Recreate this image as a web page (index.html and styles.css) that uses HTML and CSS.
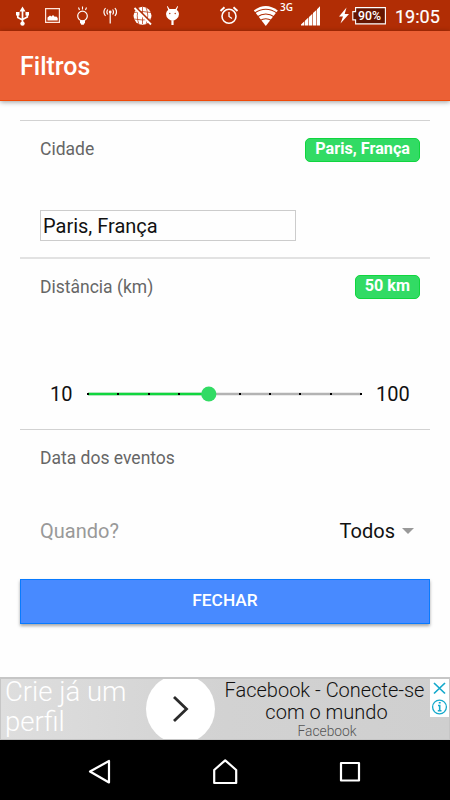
FILE: index.html
```html
<!DOCTYPE html>
<html lang="pt">
<head>
<meta charset="utf-8">
<title>Filtros</title>
<link rel="stylesheet" href="styles.css">
</head>
<body>
<div class="status">
  <svg class="usb" width="14" height="31" viewBox="16 0 14 31"><path d="M22.500 9v14M17.800 13v4.500l4.700 2.500M27.300 13v4l-4.800 2.500" fill="none" stroke="#fff" stroke-width="1.700"/><path d="M19.500 11.500l3-5 3 5zM16 12h3.500v3.500H16zM25.500 12H29v3.500h-3.500z" fill="#fff"/><circle cx="22.500" cy="23.600" r="2.200" fill="#fff"/></svg>
  <svg class="photo" width="16" height="31" viewBox="45 0 16 31"><path d="M45.600 8.600h13.800v13.800H45.600z" fill="none" stroke="#ffe5dc" stroke-width="1.200"/><path d="M47.500 20.500v-3l2.500-2 1.500 1 1.500-1.500 2 2 1-.8 1.700 1.800v2.500z" fill="#fff"/></svg>
  <svg class="bulb" width="14" height="31" viewBox="76 0 14 31"><circle cx="82.500" cy="16" r="4.800" fill="none" stroke="#fff" stroke-width="1.200"/><path d="M82.500 6.500v3M78.500 7.500l1 2.500M86.500 7.500l-1 2.500" stroke="#fff" stroke-width="1.100"/><path d="M80 20.500h5v2l-1.300 2.200h-2.400L80 22.500z" fill="#fff"/></svg>
  <svg class="antenna" width="14" height="31" viewBox="103 0 14 31"><path d="M110.200 12v11.500" stroke="#fff" stroke-width="1.200"/><circle cx="110.200" cy="12" r="1.400" fill="#fff"/><path d="M107.800 9.500q-1.800 2.500 0 5M112.600 9.500q1.800 2.500 0 5M105.500 8q-3.200 4 0 8M114.900 8q3.200 4 0 8" fill="none" stroke="#fff" stroke-width="1.200"/></svg>
  <svg class="globe" width="20" height="31" viewBox="133 0 20 31"><circle cx="142.500" cy="15.800" r="9" fill="#fff"/><path d="M134 12.500q8.500-2 17 0M134 19q8.500 2 17 0M142.500 7v17M139 7.500q-3.500 8 0 17M146 7.500q3.500 8 0 17" fill="none" stroke="#b12d05" stroke-width=".7"/><path d="M136.300 7.800L151.500 23" stroke="#b12d05" stroke-width="2"/><path d="M134.500 8L151 24.500" stroke="#fff" stroke-width="1.800"/></svg>
  <svg class="droid" width="14" height="31" viewBox="165 0 14 31"><path d="M167.500 6l2 3h6l2-3 .6.500-1.300 3.200q2.200 1.800 2.200 4.300 0 3-2.500 5-2 1.800-4 1.800t-4-1.800q-2.500-2-2.500-5 0-2.500 2.200-4.300L166.900 6.500z" fill="#fff"/><path d="M171.400 20.300h2.200V25h-2.200z" fill="#fff"/><circle cx="169.800" cy="13.500" r=".7" fill="#b12d05"/><circle cx="175.200" cy="13.500" r=".7" fill="#b12d05"/></svg>
  <svg class="alarm" width="20" height="31" viewBox="219 0 20 31"><circle cx="229" cy="16.300" r="7" fill="none" stroke="#fff" stroke-width="1.600"/><path d="M229 12v4.500l3 2" fill="none" stroke="#fff" stroke-width="1.300"/><path d="M220.500 11l4-3.700M237.500 11l-4-3.700" stroke="#fff" stroke-width="1.900"/></svg>
  <svg class="wifi" width="25" height="31" viewBox="253 0 25 31"><path d="M265.800 26L253.800 10.500Q265.800 1.500 277.800 10.500z" fill="#fff"/><path d="M254 13.500q11.800-8.500 23.600 0M257 17q8.800-6 17.600 0M260 20.500q5.800-3.500 11.600 0" fill="none" stroke="#b12d05" stroke-width="1.100"/></svg>
  <span class="net">3G</span>
  <svg class="signal" width="20" height="31" viewBox="301 0 20 31"><path d="M301 25.500v-1l3.400-3.200v4.200zM305 25.500v-4.800l3.400-3.200v8zM309 25.500v-8.600l3.400-3.200v11.800zM313 25.500V13.100l3.400-3.200v15.600zM317 25.500V9.300l3-3v19.200z" fill="#fff"/></svg>
  <svg class="bolt" width="11" height="31" viewBox="339 0 11 31"><path d="M346.500 7.500l-7.500 9h4l-2.500 7 8.500-9.500h-4.300z" fill="#fff"/></svg>
  <div class="battery"><svg width="35" height="18" viewBox="0 0 35 18"><path d="M3.600.6h29.800v16.300H3.600v-4H.8V4.600h2.800z" fill="#651500" stroke="#fff" stroke-width="1.100"/></svg><span class="level">90%</span></div>
  <span class="clock">19:05</span>
</div>
<header class="bar"><h1>Filtros</h1></header>
<main>
  <section class="city">
    <div class="row"><span>Cidade</span><span class="badge">Paris, França</span></div>
    <div class="field">Paris, França</div>
  </section>
  <section class="distance">
    <div class="row"><span>Distância (km)</span><span class="badge">50 km</span></div>
    <div class="range"><span class="min">10</span>
      <svg class="slider" width="276" height="16" viewBox="0 0 276 16"><path d="M2 8h273" stroke="#b3b3b3" stroke-width="2.600"/><path d="M2 8h121" stroke="#10d63e" stroke-width="2.600"/><path d="M1 8h2M31 8h2M62 8h2M92 8h2M153 8h2M183 8h2M213 8h2M244 8h2M274 8h2" stroke="#000" stroke-width="2"/><circle cx="122.800" cy="8" r="7.600" fill="#32db64"/></svg>
      <span class="max">100</span></div>
  </section>
  <section class="date">
    <div class="row"><span>Data dos eventos</span></div>
    <div class="select"><span class="when">Quando?</span><span class="value">Todos</span><i class="caret"></i></div>
  </section>
  <div class="button">FECHAR</div>
</main>
<aside class="ad">
  <div class="pitch">Crie já um<br>perfil</div>
  <svg class="go" width="69" height="60" viewBox="0 0 69 60"><circle cx="34.500" cy="30" r="34.500" fill="#fff"/><path d="M28 18l12.500 12L28 42" fill="none" stroke="#2b2b2b" stroke-width="2.800"/></svg>
  <div class="copy"><div class="headline">Facebook - Conecte-se</div><div class="headline second">com o mundo</div><div class="brand">Facebook</div></div>
  <svg class="choices" width="19" height="38" viewBox="0 0 19 38"><path d="M0 0h19v38H0z" fill="#fff"/><path d="M4 4l11 10.500M15 4L4 14.500" stroke="#14a9cc" stroke-width="1.700"/><circle cx="9.500" cy="28" r="6.900" fill="none" stroke="#14a9cc" stroke-width="1.300"/><path d="M8 26.500h1.700v5M7.800 31.700h3.700M8.800 23.800h1.900" fill="none" stroke="#14a9cc" stroke-width="1.600"/></svg>
</aside>
<nav>
  <svg width="24" height="26" viewBox="0 0 24 26"><path d="M21 2v21.500L2 12.500z" fill="none" stroke="#fff" stroke-width="2.200" stroke-linejoin="round"/></svg>
  <svg width="26" height="26" viewBox="0 0 26 26"><path d="M1.200 24v-13L12.200 1.300 23.200 11v13z" fill="none" stroke="#fff" stroke-width="2.200" stroke-linejoin="round"/></svg>
  <svg width="22" height="22" viewBox="0 0 22 22"><path d="M2 2h18v17.500H2z" fill="none" stroke="#fff" stroke-width="2.200" stroke-linejoin="round"/></svg>
</nav>
</body>
</html>
```
FILE: styles.css
```css
* { box-sizing: border-box; }
body { margin: 0; width: 450px; height: 800px; overflow: hidden; display: flex; flex-direction: column; background: #fefefe; font-family: Roboto, sans-serif; color: #111; }
svg { display: block; flex: none; }
span, h1 { white-space: nowrap; }

.status { height: 31px; flex: none; display: flex; background: #b12d05; color: #fff; }
.usb { margin-left: 16px; }
.photo { margin-left: 15px; }
.bulb { margin-left: 15px; }
.antenna { margin-left: 13px; }
.globe { margin-left: 16px; }
.droid { margin-left: 12px; }
.alarm { margin-left: 40px; }
.wifi { margin-left: 14px; }
.net { width: 13px; margin-left: 2px; font: 600 10px/14px "Open Sans", sans-serif; }
.signal { margin-left: 8px; }
.bolt { margin-left: 18px; }
.battery { position: relative; margin: 7px 0 0 2px; width: 35px; }
.level { position: absolute; left: 6px; top: 0; font-size: 12.300px; font-weight: 500; line-height: 18px; }
.clock { margin-left: 8px; font-size: 18px; font-weight: 400; line-height: 33px; -webkit-text-stroke: .2px #fff; }

.bar { height: 70px; flex: none; background: #eb6035; border-bottom: 1px solid #f04a08; box-shadow: 0 1px 5px rgba(0, 0, 0, .4); padding-left: 20px; }
h1 { margin: 0; font-size: 25px; font-weight: 500; line-height: 72px; color: #fff; }

main { height: 576px; flex: none; padding: 19px 20px 0; }
section { border-top: 1px solid #d2d2d2; padding: 0 10px 0 20px; }
.city { height: 137px; }
.distance { height: 172px; border-top: 2px solid #e2e2e2; }
.date { height: 150px; }
.row { display: flex; justify-content: space-between; align-items: flex-start; padding-top: 17px; height: 58px; font-size: 17.500px; line-height: 23px; color: #666; }
.distance .row { padding-top: 16px; line-height: 24px; }
.badge { height: 24px; padding: 0 9px; border: 1px solid #10d63e; border-radius: 5px; background: #32db64; color: #fff; font-size: 16.200px; font-weight: 700; line-height: 20px; }
.field { width: 256px; height: 31px; margin-top: 31px; border: 1px solid #ccc; padding-left: 2px; font-size: 20px; line-height: 30px; }
.range { display: flex; align-items: center; height: 24px; margin-top: 65px; padding-left: 10px; font-size: 20px; line-height: 22px; }
.min { width: 36px; }
.max { margin-left: 14px; }
.select { display: flex; align-items: center; height: 24px; margin-top: 31px; font-size: 20px; }
.when { color: #999; flex: 1; }
.caret { border: 6px solid transparent; border-top-color: #999; border-bottom: 0; margin: 0 6px 0 7px; }
.button { height: 45px; background: #488aff; border: 1px solid #087aff; box-shadow: 0 2px 3px rgba(0, 0, 0, .35); color: #fff; text-align: center; font-size: 17.300px; font-weight: 500; line-height: 41px; }

.ad { position: relative; height: 63px; flex: none; display: flex; background: linear-gradient(90deg, #dedede, #d2d2d2 50%, #cfcfcf); border: 1px solid #c6c6c6; border-width: 2px 1px 1px; }
.pitch { width: 145px; padding: 0 0 0 4px; color: #fff; font-size: 27.500px; font-weight: 300; line-height: 30px; margin-top: -2px; white-space: nowrap; }
.copy { width: 216px; margin-left: 3px; text-align: center; white-space: nowrap; }
.headline { font-size: 20px; font-weight: 300; line-height: 22px; padding-right: 3px; }
.headline.second { padding: 0 0 0 1px; }
.brand { font-size: 13.800px; font-weight: 300; line-height: 16px; color: #555; padding-left: 2px; }
.choices { position: absolute; right: 0; top: 0; }

nav { height: 60px; flex: none; background: #000; display: flex; justify-content: space-between; align-items: center; padding: 4px 89px 0 88px; }
```
